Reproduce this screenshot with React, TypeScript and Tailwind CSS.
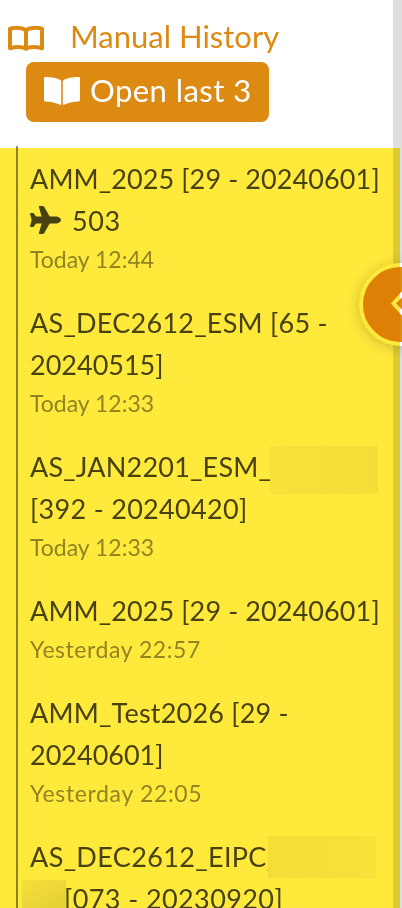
import { FaPlane } from 'react-icons/fa6';

interface Entry {
  lines: string[];
  tracking: string[];
  flight?: string;
  time?: string;
  timeTracking?: string;
}

const entries: Entry[] = [
  {
    lines: ['AMM_2025 [29 - 20240601]'],
    tracking: ['tracking-[0.1px]'],
    flight: '503',
    time: 'Today 12:44',
  },
  {
    lines: ['AS_DEC2612_ESM [65 -', '20240515]'],
    tracking: ['tracking-[0.25px]', ''],
    time: 'Today 12:33',
  },
  {
    lines: ['AS_JAN2201_ESM_', '[392 - 20240420]'],
    tracking: ['tracking-[0.2px]', 'tracking-[0.3px]'],
    time: 'Today 12:33',
  },
  {
    lines: ['AMM_2025 [29 - 20240601]'],
    tracking: ['tracking-[0.1px]'],
    time: 'Yesterday 22:57',
    timeTracking: 'tracking-[0.55px]',
  },
  {
    lines: ['AMM_Test2026 [29 -', '20240601]'],
    tracking: ['tracking-[0.2px]', ''],
    time: 'Yesterday 22:05',
    timeTracking: 'tracking-[0.65px]',
  },
  {
    lines: ['AS_DEC2612_EIPC_', '[073 - 20230920]'],
    tracking: ['tracking-[0.35px]', 'tracking-[0.4px] pl-[34px]'],
  },
];

function BookOutline() {
  return (
    <svg width="36" height="25" viewBox="0 0 36 25" fill="none" stroke="#dd8a13" strokeWidth="4" strokeLinejoin="round">
      <path d="M18 4.2C14 1.6 8 1.4 2 2.6V22.2C8 20.8 14 20.6 18 22.8C22 20.6 28 20.8 34 22.2V2.6C28 1.4 22 1.6 18 4.2Z" />
      <path d="M18 4V22" />
    </svg>
  );
}

function BookSolid() {
  return (
    <svg width="36" height="28" viewBox="0 0 36 28" fill="white">
      <path d="M1.3 0C7 0 13.5 1 16.6 3.3Q17.2 3.7 17.2 4.4V27.2Q17.2 28.2 16.2 27.7C12 25.6 6.500 24.700 1.300 24.400Q0 24.300 0 23V1.300Q0 0 1.300 0Z" />
      <path d="M34.7 0C29 0 22.500 1 19.400 3.300Q18.800 3.700 18.800 4.400V27.200Q18.800 28.200 19.800 27.700C24 25.600 29.500 24.700 34.700 24.400Q36 24.300 36 23V1.300Q36 0 34.700 0Z" />
    </svg>
  );
}

function HistoryEntry({ entry }: { entry: Entry }) {
  return (
    <li className="pb-[26px]">
      {entry.lines.map((line, i) => (
        <p key={line} className={`h-[42px] text-[27px] leading-[42px] text-[#484848] ${entry.tracking[i]}`}>
          {line}
        </p>
      ))}
      {entry.flight && (
        <p className="flex h-[42px] items-center gap-[11px] text-[27px] leading-[42px] tracking-[0.6px] text-[#484848]">
          <FaPlane className="mb-[3px] h-7 w-[31px]" preserveAspectRatio="none" />
          {entry.flight}
        </p>
      )}
      {entry.time && (
        <p className={`h-[34px] text-[23px] leading-[34px] text-[#919191] ${entry.timeTracking ?? ''}`}>{entry.time}</p>
      )}
    </li>
  );
}

export default function App() {
  return (
    <div className="relative isolate flex h-[908px] w-[402px] overflow-hidden bg-white font-['Lato',sans-serif] whitespace-nowrap">
      <div className="flex w-[393px] shrink-0 flex-col">
        <header className="flex h-[146px] shrink-0 flex-col items-start">
          <div className="flex h-[62px] items-center gap-[26px] pt-[14px] pl-2 text-[31px] text-[#dd8a13]">
            <BookOutline />
            <span className="pb-[3px]">Manual History</span>
          </div>
          <button className="ml-[26px] flex h-[60px] w-[243px] items-center gap-[10px] rounded-lg bg-[#dd8a13] pb-[3px] pl-[18px] text-[31px] tracking-[0.45px] text-white">
            <BookSolid />
            <span>Open last 3</span>
          </button>
        </header>
        <ul className="ml-4 flex-1 border-l-2 border-[#8f8f8f] pt-3 pl-3">
          {entries.map((entry, i) => (
            <HistoryEntry key={i} entry={entry} />
          ))}
        </ul>
      </div>
      <div className="w-[9px] bg-[#dedede]" />

      {/* drawer toggle */}
      <button className="absolute top-[263px] left-[359px] flex size-[83px] items-center justify-start rounded-full border-4 border-white bg-[#dd8c13] pl-[27px] shadow-[0_2px_14px_rgba(0,0,0,0.2)]">
        <svg width="20" height="28" viewBox="0 0 20 28" fill="none" stroke="white" strokeWidth="4">
          <path d="M14 1L3.500 12.500L14 24" />
        </svg>
      </button>

      {/* highlight */}
      <div className="absolute top-[148px] left-0 h-[760px] w-[400px] bg-[#ffe93b] mix-blend-multiply" />

      {/* redacted names */}
      <div className="absolute top-[446px] left-[270px] h-12 w-[108px] bg-linear-to-r from-[#f7e23a] to-[#f3de38]" />
      <div className="absolute top-[836px] left-[268px] h-[42px] w-[108px] bg-linear-to-r from-[#f3de38] to-[#f7e23a]" />
      <div className="absolute top-[880px] left-[22px] h-7 w-11 bg-linear-to-br from-[#f4df3a] to-[#e5d035]" />
    </div>
  );
}
